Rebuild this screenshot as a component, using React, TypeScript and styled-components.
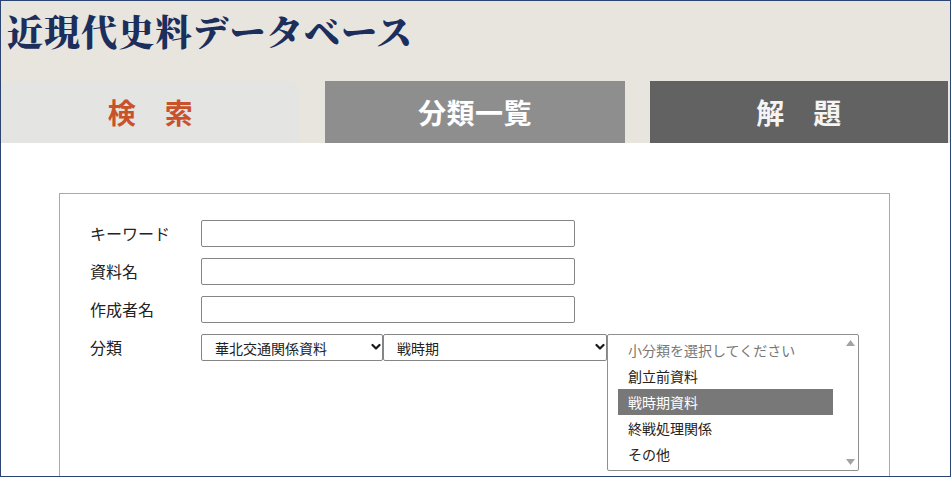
import React from "react";
import styled, { createGlobalStyle } from "styled-components";

const Global = createGlobalStyle`
  html, body {
    margin: 0;
    padding: 0;
    background: #ffffff;
  }
  body {
    font-family: "Noto Sans CJK JP", "Noto Sans", sans-serif;
    color: #222;
  }
`;

const Frame = styled.div`
  width: 951px;
  height: 477px;
  box-sizing: border-box;
  border: 1px solid #2c4473;
  overflow: hidden;
  background: #ffffff;
  display: flex;
  flex-direction: column;
`;

const Header = styled.header`
  background: #e8e5de;
  display: flex;
  flex-direction: column;
  flex-shrink: 0;
`;

const SiteTitle = styled.h1`
  margin: 0;
  height: 80px;
  box-sizing: border-box;
  padding: 12px 0 0 6px;
  font-family: "Noto Serif CJK JP", "Noto Sans CJK JP", serif;
  font-size: 36px;
  line-height: 36px;
  font-weight: 900;
  letter-spacing: 1.1px;
  color: #1b2e5c;
`;

const TabBar = styled.nav`
  display: flex;
  gap: 25px;
  height: 62px;
`;

const Tab = styled.div<{ $w: number; $bg: string; $fg: string; $round?: boolean }>`
  width: ${(p) => p.$w}px;
  flex-shrink: 0;
  display: flex;
  align-items: center;
  justify-content: center;
  background: ${(p) => p.$bg};
  color: ${(p) => p.$fg};
  border-radius: ${(p) => (p.$round ? "10px 12px 0 0" : "0")};
  font-size: 28px;
  font-weight: 700;
  line-height: 1;
  letter-spacing: 0.5px;
`;

const Panel = styled.section`
  flex-shrink: 0;
  margin: 50px 0 0 58px;
  width: 831px;
  min-height: 400px;
  box-sizing: border-box;
  border: 1px solid #a9a9a9;
  padding: 26px 0 0 30px;
  display: flex;
  flex-direction: column;
  gap: 11px;
`;

const FormRow = styled.div<{ $top?: boolean }>`
  display: flex;
  align-items: ${(p) => (p.$top ? "flex-start" : "center")};
`;

const Label = styled.label`
  width: 111px;
  flex-shrink: 0;
  font-size: 16px;
  line-height: 27px;
  color: #222;
`;

const TextInput = styled.input`
  width: 374px;
  height: 27px;
  box-sizing: border-box;
  margin: 0;
  border: 1px solid #858585;
  border-radius: 2px;
  padding: 0 4px;
  font-family: inherit;
  font-size: 14px;
  background: #fff;
`;

const SelectWrap = styled.div<{ $w: number }>`
  position: relative;
  width: ${(p) => p.$w}px;
  height: 27px;
  flex-shrink: 0;
`;

const Select = styled.select`
  appearance: none;
  -webkit-appearance: none;
  width: 100%;
  height: 100%;
  box-sizing: border-box;
  margin: 0;
  border: 1px solid #858585;
  border-radius: 2px;
  padding: 0 0 0 13px;
  font-family: inherit;
  font-size: 14px;
  color: #222;
  background: #fff;
`;

const Chevron = styled.svg`
  position: absolute;
  right: 2px;
  top: 9px;
  width: 10px;
  height: 8px;
  pointer-events: none;
`;

const ListBox = styled.div`
  width: 252px;
  height: 137px;
  box-sizing: border-box;
  border: 1px solid #8f8f8f;
  border-radius: 2px;
  background: #fff;
  display: flex;
  flex-shrink: 0;
`;

const ListItems = styled.ul`
  list-style: none;
  margin: 0;
  padding: 2px 10px 0 10px;
  width: 235px;
  box-sizing: border-box;
  flex-shrink: 0;
`;

const ListItem = styled.li<{ $selected?: boolean; $muted?: boolean }>`
  height: 26px;
  line-height: 26px;
  padding-left: 10px;
  font-size: 14px;
  white-space: nowrap;
  color: ${(p) => (p.$selected ? "#ffffff" : p.$muted ? "#777777" : "#222222")};
  background: ${(p) => (p.$selected ? "#787878" : "transparent")};
`;

const ScrollTrack = styled.div`
  width: 15px;
  display: flex;
  flex-direction: column;
  justify-content: space-between;
  align-items: center;
  padding: 5px 0 5px;
  box-sizing: border-box;
`;

const Arrow = styled.svg`
  width: 9px;
  height: 6px;
  display: block;
`;

const SelectBox = ({ width, value, options }: { width: number; value: string; options: string[] }) => (
  <SelectWrap $w={width}>
    <Select defaultValue={value}>
      {options.map((o) => (
        <option key={o}>{o}</option>
      ))}
    </Select>
    <Chevron viewBox="0 0 10 8">
      <path d="M1.5 2 L5 5.5 L8.5 2" fill="none" stroke="#1a1a1a" strokeWidth="2.2" strokeLinecap="round" strokeLinejoin="round" />
    </Chevron>
  </SelectWrap>
);

const subItems = ["創立前資料", "戦時期資料", "終戦処理関係", "その他"];

export default function App() {
  return (
    <>
      <Global />
      <Frame>
        <Header>
          <SiteTitle>近現代史料データベース</SiteTitle>
          <TabBar>
            <Tab $w={299} $bg="#e4e4e2" $fg="#c8532b" $round>
              検　索
            </Tab>
            <Tab $w={300} $bg="#8e8e8e" $fg="#ffffff">
              分類一覧
            </Tab>
            <Tab $w={298} $bg="#626262" $fg="#f4f4f4">
              解　題
            </Tab>
          </TabBar>
        </Header>
        <Panel>
          <FormRow>
            <Label>キーワード</Label>
            <TextInput type="text" />
          </FormRow>
          <FormRow>
            <Label>資料名</Label>
            <TextInput type="text" />
          </FormRow>
          <FormRow>
            <Label>作成者名</Label>
            <TextInput type="text" />
          </FormRow>
          <FormRow $top>
            <Label>分類</Label>
            <SelectBox width={182} value="華北交通関係資料" options={["華北交通関係資料"]} />
            <SelectBox width={224} value="戦時期" options={["戦時期"]} />
            <ListBox>
              <ListItems>
                <ListItem $muted>小分類を選択してください</ListItem>
                {subItems.map((s) => (
                  <ListItem key={s} $selected={s === "戦時期資料"}>
                    {s}
                  </ListItem>
                ))}
              </ListItems>
              <ScrollTrack>
                <Arrow viewBox="0 0 9 6">
                  <path d="M4.5 0 L9 6 L0 6 Z" fill="#a3a3a3" />
                </Arrow>
                <Arrow viewBox="0 0 9 6">
                  <path d="M0 0 L9 0 L4.5 6 Z" fill="#a3a3a3" />
                </Arrow>
              </ScrollTrack>
            </ListBox>
          </FormRow>
        </Panel>
      </Frame>
    </>
  );
}
